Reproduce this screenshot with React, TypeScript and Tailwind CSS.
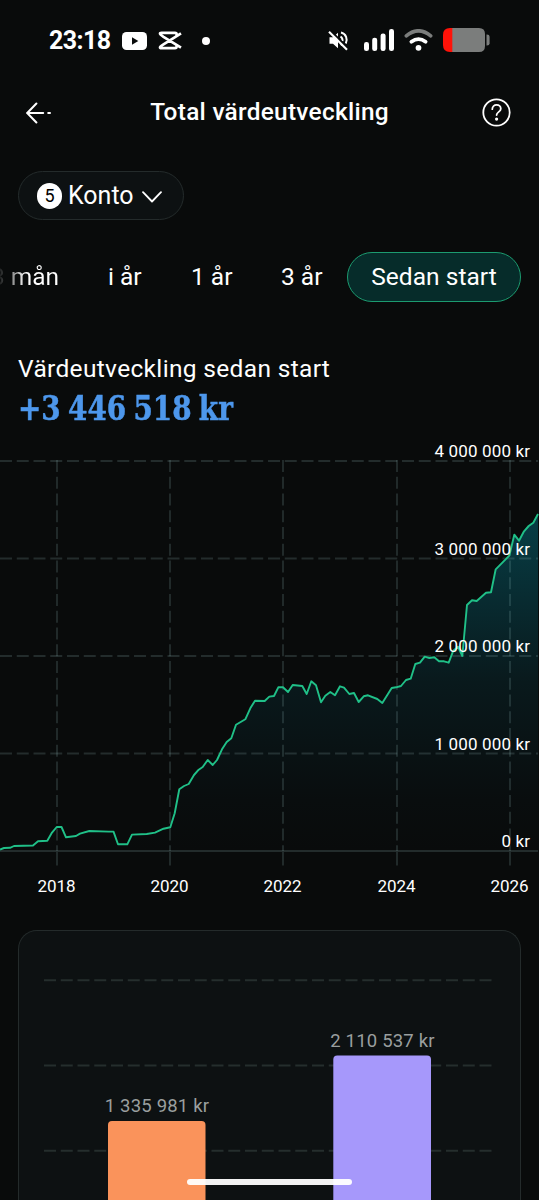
import React from "react";

const linePoints =
  "0,849.5 4,848 10,847.8 14,846 33,845.5 38,841.3 47.3,840.7 52,832.6 56.7,827 61.5,827 66,837.3 76,836 80,833.6 89.3,831 108.7,831.6 113.5,831.6 118,844.3 127.3,844.3 132,834.6 146.7,834 155,832.6 163.5,828.7 170.3,827.3 174.7,813.3 179.3,789.3 184,786 188.7,784 194,775 198.7,769.7 202.7,767 207.7,760 212.7,765 217,760 222,749.3 226.7,742 231.3,738.3 236,724.7 245.3,719.3 250.3,708.3 255,700.7 264.7,701 269.3,696.6 274,696 278.3,687.3 283,687.3 288,692 292.7,685 302.3,686 306.7,694 311.3,681.3 316,685.3 321,702.3 325.3,695.7 330.3,692 335,695.3 340,686.3 344,687.7 349.3,694 354,693 358.7,702 363.7,696.3 368,695.3 377.3,699 382.3,703 391.7,688 396,687.3 401,686 406,680 410.7,678.7 415.3,664 420,662.7 424.7,656.7 429.3,658 434.3,657.3 439,661.3 444,661.3 448.7,662.7 453.3,650.7 458,646.7 462.3,656 467,605 472,600.3 476.7,601 486,592.7 491,592.3 495.7,569.3 509.3,555.7 514.3,534.7 519,540.7 524,531.3 528.7,526 533.3,522.7 538,514";

const rows = [
  { y: 461, label: "4 000 000 kr" },
  { y: 558.5, label: "3 000 000 kr" },
  { y: 656, label: "2 000 000 kr" },
  { y: 753.5, label: "1 000 000 kr" },
  { y: 851, label: "0 kr" },
];

const years = [
  { x: 57, label: "2018" },
  { x: 170, label: "2020" },
  { x: 283, label: "2022" },
  { x: 397, label: "2024" },
  { x: 510, label: "2026" },
];

function StatusBar() {
  return (
    <div className="flex h-[81px] items-center pl-[49px] pr-[49px]">
      <span className="w-[62px] whitespace-nowrap text-[25px] font-bold leading-none tracking-[-0.6px]">23:18</span>
      <svg className="ml-[11px]" width="25" height="18" viewBox="0 0 25 18">
        <rect width="25" height="18" rx="4.5" fill="#fff" />
        <path d="M10 5.3v7.4l6.3-3.7z" fill="#090b0b" />
      </svg>
      <svg className="ml-[11px]" width="24" height="19" viewBox="0 0 24 19" fill="none" stroke="#fff" strokeWidth="2.7" strokeLinejoin="round">
        <path d="M23 2.4 5.5 13.4Q2 15.7 2 16.2Q2 17.2 3.5 17.2H17Q18.6 17.2 18.6 15.5V14.4M23 16.7 5.5 5.8Q2 3.5 2 2.8Q2 1.8 3.5 1.8H17Q18.6 1.8 18.6 3.2V4.5" />
      </svg>
      <span className="ml-[20px] h-[8px] w-[8px] rounded-full bg-white" />
      <div className="mb-[1px] ml-auto flex items-center">
        <svg width="21" height="21" viewBox="0 0 21 21" fill="none" stroke="#fff" strokeWidth="2">
          <path d="M1.5 7.2H5l5-4.4v15.4l-5-4.4H1.5z" fill="#fff" stroke="none" />
          <path d="M12.5 6.5q2.3 1.4 2 4.7M13 2.5c5 1 7 7 4.8 11M12.7 15.2l1.8-1" />
          <path d="M2.7.8 20.5 18.6" stroke="#090b0b" strokeWidth="2" />
          <path d="M1 1.8 19 19.8" strokeWidth="2.1" />
        </svg>
        <svg className="ml-[15px]" width="30" height="22" viewBox="0 0 30 22" fill="#fff">
          <rect x="0" y="13" width="5" height="9" rx="2.3" />
          <rect x="8.2" y="8.8" width="5" height="13.2" rx="2.3" />
          <rect x="16.6" y="4.4" width="5" height="17.6" rx="2.3" />
          <rect x="25" y="0" width="5" height="22" rx="2.3" />
        </svg>
        <svg className="ml-[10px]" width="29" height="22" viewBox="0 0 29 22" fill="none" strokeWidth="3.6" strokeLinecap="round">
          <path d="M2.3 6.8Q14.5-3.2 26.7 6.8" stroke="#7b7d7c" />
          <path d="M7.4 12.7Q14.5 7.5 21.6 12.7" stroke="#fff" strokeWidth="3.8" />
          <circle cx="14.5" cy="18.8" r="2.9" fill="#fff" />
        </svg>
        <svg className="ml-[10px]" width="47" height="24" viewBox="0 0 47 24">
          <path d="M9 0H36q6 0 6 6V18q0 6-6 6H9z" fill="#7b7d7c" />
          <path d="M9.3 0H7Q0 0 0 7V17q0 7 7 7H9.3z" fill="#ff1208" />
          <path d="M43.5 6.5H44q2.6 0 2.6 2.2v6.6q0 2.2-2.6 2.2h-.5z" fill="#7b7d7c" />
        </svg>
      </div>
    </div>
  );
}

function Header() {
  return (
    <header className="flex h-[63px] items-center justify-between pl-[26px] pr-[28px]">
      <svg className="mt-[1px]" width="29" height="22" viewBox="0 0 29 22" fill="none" stroke="#fff" strokeWidth="2" strokeLinecap="round">
        <path d="M10.4 1.5 1.2 11l9.2 9.5M1.5 11H17.2M22.2 11H24" />
      </svg>
      <h1 className="ml-[2px] whitespace-nowrap text-[24.4px] font-medium leading-none tracking-[0.28px]">Total värdeutveckling</h1>
      <svg className="-mt-[1px]" width="29" height="29" viewBox="0 0 29 29" fill="none" stroke="#fff" strokeWidth="1.8" strokeLinecap="round">
        <circle cx="14.5" cy="14.5" r="13.2" />
        <path d="M10.3 11.2c0-2.6 1.9-4.4 4.3-4.4s4.2 1.7 4.2 3.9c0 3.1-4.2 3.2-4.2 6.4" />
        <circle cx="14.6" cy="21.1" r="1.6" fill="#fff" stroke="none" />
      </svg>
    </header>
  );
}

function GrowthChart() {
  return (
    <svg className="block h-[465px] w-full" viewBox="0 440 539 465" fontFamily='Roboto, "Noto Sans", sans-serif' fontSize="17">
      <defs>
        <linearGradient id="area" gradientUnits="userSpaceOnUse" x1="0" y1="514" x2="0" y2="851">
          <stop offset="0" stopColor="#073e46" />
          <stop offset="0.5" stopColor="#09191c" />
          <stop offset="0.85" stopColor="#090d0e" />
          <stop offset="1" stopColor="#090b0b" />
        </linearGradient>
      </defs>
      <polygon points={`${linePoints} 538,851 0,851`} fill="url(#area)" />
      <g stroke="#a4d2d2" strokeOpacity="0.17" strokeWidth="1.9">
        {rows.map((r) => (
          <path key={r.y} d={`M0 ${r.y}H538`} strokeDasharray={r.y === 851 ? undefined : "12 4.75"} />
        ))}
        {years.map((t) => (
          <g key={t.x}>
            <path d={`M${t.x} 460V851`} strokeDasharray="12 4.75" />
            <path d={`M${t.x} 852V865.5`} />
          </g>
        ))}
      </g>
      <polyline points={linePoints} fill="none" stroke="#20c088" strokeWidth="1.9" strokeLinejoin="round" />
      <g fill="#fff">
        {rows.map((r) => (
          <text key={r.y} x="530.3" y={r.y - 3.7} textAnchor="end" letterSpacing="0.16">{r.label}</text>
        ))}
        {years.map((t) => (
          <text key={t.x} x={t.x - 0.5} y="891.5" textAnchor="middle">{t.label}</text>
        ))}
      </g>
    </svg>
  );
}

function BarCard() {
  return (
    <section className="mx-[18px] mt-[25px] h-[300px] rounded-t-[19px] border border-b-0 border-[#242b2b] bg-[#0d1112]">
      <svg className="block h-[269px] w-full" viewBox="19 931 501 269" fontFamily='Roboto, "Noto Sans", sans-serif' fontSize="18.5" letterSpacing="0.2">
        <g stroke="#252e2d" strokeWidth="1.9" strokeDasharray="12 4.75">
          <path d="M44 980.3H493M44 1065.5H493M44 1150.8H493" />
        </g>
        <rect x="108" y="1121" width="97.5" height="90" rx="4" fill="#fa935b" />
        <rect x="333.3" y="1055.5" width="97.7" height="160" rx="4" fill="#a698fb" />
        <g fill="#9a9f9f" textAnchor="middle">
          <text x="157" y="1112">1 335 981 kr</text>
          <text x="382.5" y="1046.5">2 110 537 kr</text>
        </g>
      </svg>
    </section>
  );
}

export default function App() {
  return (
    <main className="relative h-[1200px] w-[539px] overflow-hidden bg-[#090b0b] font-[Roboto,'Noto_Sans',sans-serif] text-white">
      <StatusBar />
      <Header />
      <div className="px-[18px] pt-[27px]">
        <button className="flex h-[49px] w-[166px] items-center rounded-full border border-[#242b2b] bg-[#0d1112] pl-[18px]">
          <span className="flex h-[26px] w-[25px] items-center justify-center rounded-full bg-white text-[18px] leading-none text-black">5</span>
          <span className="ml-[6px] w-[66px] text-left text-[25px] leading-none">Konto</span>
          <svg className="ml-[8px] mt-[2px]" width="20" height="12" viewBox="0 0 20 12" fill="none" stroke="#fff" strokeWidth="1.8" strokeLinecap="round" strokeLinejoin="round">
            <path d="M1 1.2 10 10.5 19 1.2" />
          </svg>
        </button>
      </div>
      <nav className="mt-[32px] flex h-[50px] items-center whitespace-nowrap text-[24.5px] leading-none">
        <div className="flex w-[59px] items-baseline justify-end">
          <span className="mr-[6px] bg-linear-to-r from-transparent from-40% to-white/25 bg-clip-text py-1 text-transparent">3</span>
          <span className="bg-linear-to-r from-white/50 to-white to-30% bg-clip-text py-1 text-transparent">mån</span>
        </div>
        <span className="ml-[49px] w-[34px]">i år</span>
        <span className="ml-[49px] w-[41px]">1 år</span>
        <span className="ml-[49px] w-[41px]">3 år</span>
        <span className="ml-[25px] flex h-[50px] w-[174px] items-center justify-center rounded-full border-[1.5px] border-[#1c9b70] bg-[#062c2a] tracking-[0.05px]">Sedan start</span>
      </nav>
      <div className="flex h-[138px] flex-col pl-[18px] pt-[53px]">
        <p className="whitespace-nowrap text-[24.5px] leading-[28px] tracking-[0.33px]">Värdeutveckling sedan start</p>
        <p className="mt-[4px] w-fit origin-left scale-x-[0.91] whitespace-nowrap font-['Roboto_Slab','DejaVu_Serif_Condensed','DejaVu_Serif',serif] text-[34px] font-bold leading-[42px] text-[#4d97ec] [-webkit-text-stroke:0.5px_#4d97ec] [word-spacing:-2.6px]">+3 446 518 kr</p>
      </div>
      <GrowthChart />
      <BarCard />
      <div className="absolute left-[187px] top-[1179px] h-[6px] w-[165px] rounded-full bg-white/95" />
    </main>
  );
}
